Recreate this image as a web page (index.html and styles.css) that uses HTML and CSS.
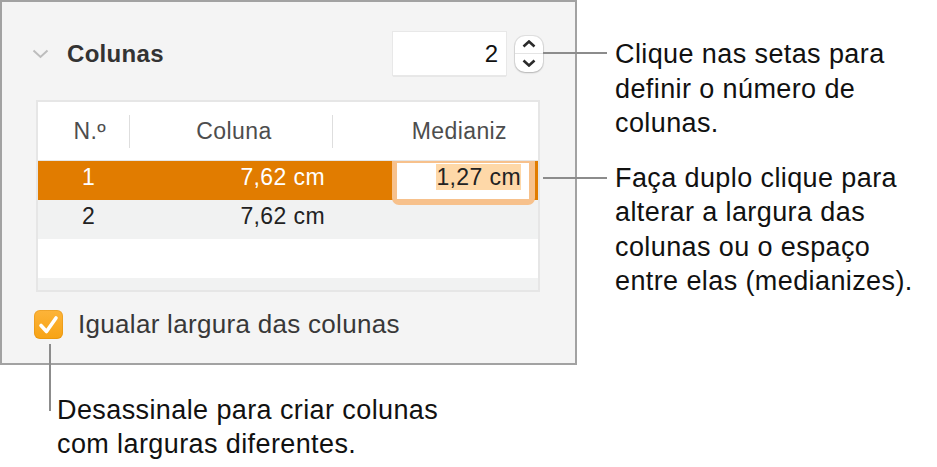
FILE: index.html
```html
<!DOCTYPE html>
<html>
<head>
  <meta charset="UTF-8">
  <meta name="viewport" content="width=device-width, initial-scale=1.0">
  <title>Colunas</title>
  <link rel="stylesheet" href="styles.css">
</head>
<body>
  <div class="figure">
    <section class="panel">
      <div class="panel-head">
        <svg class="disclosure" width="17" height="10" viewBox="0 0 17 10">
          <path d="M1.5 1.5 L8.5 8 L15.5 1.5" fill="none" stroke="#bdbdbd" stroke-width="2"/>
        </svg>
        <h2 class="panel-title">Colunas</h2>
        <div class="count-field">2</div>
        <div class="stepper">
          <button class="step">
            <svg width="14" height="8" viewBox="0 0 14 8"><path d="M1.5 6.5 L7 1.5 L12.5 6.5" fill="none" stroke="#2b2b2b" stroke-width="2.6"/></svg>
          </button>
          <button class="step">
            <svg width="14" height="8" viewBox="0 0 14 8"><path d="M1.5 1.5 L7 6.5 L12.5 1.5" fill="none" stroke="#2b2b2b" stroke-width="2.6"/></svg>
          </button>
        </div>
      </div>

      <div class="col-table">
        <div class="col-row col-header">
          <div class="head-num">N.º</div>
          <div class="head-width">Coluna</div>
          <div class="head-gutter">Medianiz</div>
        </div>
        <div class="col-row is-selected">
          <div class="cell-num">1</div>
          <div class="cell-width">7,62 cm</div>
          <div class="cell-gutter">
            <div class="edit-ring"><div class="edit-box"><span class="edit-value">1,27 cm</span></div></div>
          </div>
        </div>
        <div class="col-row is-alt">
          <div class="cell-num">2</div>
          <div class="cell-width">7,62 cm</div>
          <div class="cell-gutter"></div>
        </div>
        <div class="col-row"></div>
        <div class="col-row is-alt"></div>
      </div>

      <label class="check-row">
        <span class="check-box">
          <svg width="29" height="29" viewBox="0 0 29 29"><path d="M7 15.5 L12.5 21.5 L22 8" fill="none" stroke="#fff" stroke-width="3.6" stroke-linecap="round" stroke-linejoin="round"/></svg>
        </span>
        Igualar largura das colunas
      </label>
    </section>

    <div class="notes">
      <p class="note note-lead">Clique nas setas para<br>definir o número de<br>colunas.</p>
      <p class="note note-lead note-second">Faça duplo clique para<br>alterar a largura das<br>colunas ou o espaço<br>entre elas (medianizes).</p>
    </div>

    <p class="note note-check">Desassinale para criar colunas<br>com larguras diferentes.</p>
  </div>
</body>
</html>
```

FILE: styles.css
```css
body { margin: 0; background: #fff; font-family: "Liberation Sans", Arial, sans-serif; }
.figure { display: grid; grid-template-columns: 577px 1fr; width: 937px; height: 467px; overflow: hidden; }

/* inspector panel */
.panel { box-sizing: border-box; height: 365px; padding: 30px 32px 25px 30px; background: #f4f4f4; border: 2px solid #a2a2a2; }
.panel-head { display: flex; align-items: center; height: 43px; }
.disclosure { display: block; margin-right: 18px; }
.panel-title { margin: 0; font-size: 24px; font-weight: bold; letter-spacing: 0.3px; color: #333; }
.count-field { margin-left: auto; box-sizing: border-box; width: 113px; height: 43px; padding-right: 8px; background: #fff; text-align: right; font-size: 24px; line-height: 43px; color: #111; box-shadow: 0 0 0 1px #e8e8e8, 0 1px 1px rgba(0,0,0,0.3); }
.stepper { display: flex; flex-direction: column; width: 28px; height: 36px; margin-left: 9px; background: #fff; border-radius: 10px; box-shadow: 0 0 0 1px rgba(0,0,0,0.08), 0 1px 2px rgba(0,0,0,0.2); overflow: hidden; }
.step { display: flex; align-items: center; justify-content: center; flex: 1; padding: 0; border: none; background: none; }
.step + .step { border-top: 1px solid #e4e4e4; }

/* column table */
.col-table { box-sizing: border-box; width: 504px; height: 192px; margin: 25px 0 0 4px; background: #fff; border: 2px solid #e6e6e6; overflow: hidden; font-size: 23px; letter-spacing: 0.4px; }
.col-row { display: grid; grid-template-columns: 91px 203px 206px; height: 39px; line-height: 33px; color: #222; }
.col-row.col-header { height: 58px; align-items: center; border-bottom: 1px solid #e6e6e6; color: #4d4d4d; }
.head-num { text-align: right; padding-right: 23px; }
.head-width { height: 33px; border-left: 1px solid #dedede; text-align: center; padding-left: 6px; }
.head-gutter { height: 33px; border-left: 1px solid #dedede; text-align: right; padding-right: 31px; }
.cell-num { padding-left: 44px; }
.cell-width { text-align: right; padding-right: 7px; }
.col-row.is-selected { background: #e17c00; color: #fff; }
.col-row.is-alt { background: #f1f2f2; }

.cell-gutter { padding-left: 60px; }
.edit-ring { position: relative; box-sizing: border-box; width: 143px; height: 44px; border: solid #f7c18c; border-width: 2px 6px 6px 5px; border-radius: 0 0 7px 7px; }
.edit-box { height: 36px; padding-right: 8px; background: #fff; text-align: right; line-height: 29px; color: #222; }
.edit-value { background: #fed8a8; }

/* checkbox */
.check-row { display: flex; align-items: center; margin: 17px 0 0 2px; font-size: 26px; letter-spacing: 0.3px; color: #383838; }
.check-box { display: block; width: 29px; height: 29px; margin-right: 15px; border-radius: 6px; background: linear-gradient(#fdb43a, #f7a314); box-shadow: inset 0 0 0 1px rgba(200,120,0,0.25); }
.check-box svg { display: block; }

/* callouts */
.notes { padding: 37px 0 0 38px; }
.note { position: relative; margin: 0; font-size: 27px; letter-spacing: 0.4px; line-height: 34.5px; color: #111; }
.note-second { margin-top: 20px; }
.note-lead::before { content: ""; position: absolute; left: -72px; top: 15px; width: 64px; height: 2px; background: #8c8c8c; }
.note-second::before { top: 16px; }
.note-check { grid-column: 1 / -1; margin-top: 22px; padding-left: 57px; }
.note-check::before { content: ""; position: absolute; left: 49px; top: -49px; width: 2px; height: 67px; background: #8c8c8c; }
```
